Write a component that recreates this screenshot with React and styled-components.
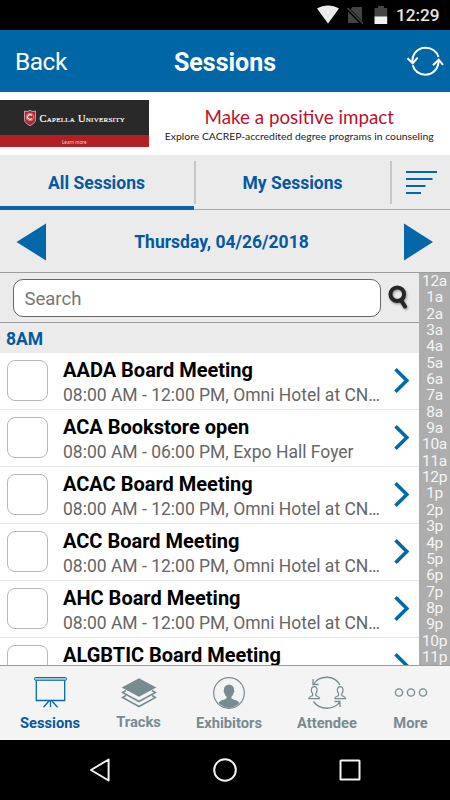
import React, { useState } from "react";
import styled, { createGlobalStyle } from "styled-components";

const sessions = [
    { title: "AADA Board Meeting", info: "08:00 AM - 12:00 PM, Omni Hotel at CN…" },
    { title: "ACA Bookstore open", info: "08:00 AM - 06:00 PM, Expo Hall Foyer" },
    { title: "ACAC Board Meeting", info: "08:00 AM - 12:00 PM, Omni Hotel at CN…" },
    { title: "ACC Board Meeting", info: "08:00 AM - 12:00 PM, Omni Hotel at CN…" },
    { title: "AHC Board Meeting", info: "08:00 AM - 12:00 PM, Omni Hotel at CN…" },
    { title: "ALGBTIC Board Meeting" },
];

const hours = ["a", "p"].flatMap((half) =>
    [12, 1, 2, 3, 4, 5, 6, 7, 8, 9, 10, 11].map((hour) => hour + half)
);

function StatusIcons() {
    return (
        <svg width="72" height="30" viewBox="0 0 72 30">
            <path d="M1 8.600C7.600 4.500 16.400 4.500 23 8.600L12 23.600Z" fill="#ececec" />
            <path d="M36.500 7H46v16H32V11.500Z" fill="#444" />
            <path d="M30.500 7.500l16 16.500" stroke="#000" strokeWidth="3.400" />
            <path d="M31.500 8l15.500 15.600" stroke="#505050" strokeWidth="1.300" />
            <path d="M62 6h6v2h3.200v9H58.500V8H62Z" fill="#444" />
            <path d="M58.500 16.500h12.700V24H58.500Z" fill="#f2f2f2" />
        </svg>
    );
}

function RefreshIcon() {
    return (
        <svg width="38" height="34" viewBox="0 0 38 34" fill="none" stroke="#fff" strokeWidth="2">
            <path d="M6.500 19C5.500 10.500 11.500 3.800 19.500 3.800c6.200 0 11.200 3.800 13 9.200" />
            <path d="M32.500 16C33 24.500 27 30.700 19.300 30.700c-6 0-11-3.800-12.600-9.500" />
            <path d="M1.500 14.300l5.200 4.900 5-5.500M27 21.200l5.700-5.400 4.300 5" />
        </svg>
    );
}

function SearchIcon() {
    return (
        <svg width="24" height="28" viewBox="0 0 24 28" fill="none">
            <defs>
                <filter id="sombra" x="-30%" y="-30%" width="160%" height="160%">
                    <feDropShadow dx="0.8" dy="1.2" stdDeviation="1.2" floodOpacity="0.4" />
                </filter>
            </defs>
            <g filter="url(#sombra)" stroke="#262626">
                <circle cx="11.300" cy="10.200" r="6.800" strokeWidth="4" />
                <path d="M15.200 16.500l3.800 6" strokeWidth="4.200" strokeLinecap="round" />
            </g>
        </svg>
    );
}

function CapellaShield() {
    return (
        <svg width="12" height="16" viewBox="0 0 12 16">
            <path d="M.5 1L3 1.600 6 .4l3 1.200 2.500-.6v8.500C11.500 12.500 9 14 6 15.700 3 14 .5 12.500.5 9.500Z" fill="#ad2430" stroke="#c8c0c0" strokeWidth=".8" />
            <circle cx="6" cy="7" r="3.800" fill="#c02834" stroke="#e5bcc0" strokeWidth=".6" />
            <path d="M7.700 5.500a2.300 2.300 0 1 0 0 3" fill="none" stroke="#fff" strokeWidth="1.200" />
        </svg>
    );
}

function SessionsIcon() {
    return (
        <svg width="34" height="34" viewBox="0 0 34 34" fill="none" stroke="#0769a8" strokeWidth="1.300">
            <path d="M3.300 4.500V24.500h28.400V4.500" />
            <rect x="1.500" y="1.500" width="32" height="2.800" rx="1" fill="#a9cae1" strokeWidth="1" />
            <path d="M17.500 25v6M16 25l-5.500 6.300M19 25l5.500 6.300" />
        </svg>
    );
}

function TracksIcon() {
    return (
        <svg width="36" height="34" viewBox="0 0 36 34" fill="none" stroke="#788b91">
            <path d="M5 19.500L1.500 21.500 18 30.500l16.500-9-3.500-2" fill="#f4f4f4" strokeWidth="1.600" />
            <path d="M5 14.500L1.500 16.500 18 25.500l16.500-9-3.500-2" fill="#f4f4f4" strokeWidth="1.600" />
            <path d="M18 2.200L35.300 11.500 18 20.800.7 11.500Z" fill="#788b91" stroke="none" />
        </svg>
    );
}

function ExhibitorsIcon() {
    return (
        <svg width="34" height="34" viewBox="0 0 34 34">
            <circle cx="17" cy="17" r="15.300" fill="none" stroke="#788b91" strokeWidth="1.200" />
            <path d="M17 8.800c3.300 0 5.200 2.200 5 5.500.8.800.3 2.300-.5 2.800-.4 1.700-1.100 2.800-2 3.500v2c3 1.600 6.600 1.800 7.900 4.500A14.800 14.800 0 0 1 17 32a14.800 14.800 0 0 1-10.400-4.900c1.300-2.700 4.900-2.900 7.900-4.500v-2c-.9-.7-1.600-1.800-2-3.500-.8-.5-1.300-2-.5-2.800-.2-3.300 1.700-5.500 5-5.500Z" fill="#788b91" />
        </svg>
    );
}

function AttendeeIcon() {
    const pessoa = "M-1.800 2.600v2c-1.200 1-4.200.9-4.200 3.300H6c0-2.400-3-2.300-4.200-3.300v-2C4.200-.2 3.500-4.700 0-4.700S-4.200-.2-1.800 2.600Z";
    return (
        <svg width="40" height="34" viewBox="0 0 40 34" fill="none" stroke="#788b91" strokeWidth="1.300">
            <path d="M33 9C27.500-1 13-1.300 6.500 8M6 3V8.500H11.500" />
            <path d="M6.500 25.500c6.500 9 20.500 9 26.700 0M27.500 25.500H33V31" />
            <path d={pessoa} transform="translate(7.200 15.200) scale(.9 .95)" />
            <path d={pessoa} transform="translate(33.200 15.200) scale(.9 .95)" />
        </svg>
    );
}

function MoreIcon() {
    return (
        <svg width="36" height="34" viewBox="0 0 36 34" fill="none" stroke="#788b91" strokeWidth="1.400">
            <circle cx="6" cy="16.500" r="3.600" />
            <circle cx="18" cy="16.500" r="3.600" />
            <circle cx="30" cy="16.500" r="3.600" />
        </svg>
    );
}

const menu = [
    { label: "Sessions", icon: <SessionsIcon />, width: 100 },
    { label: "Tracks", icon: <TracksIcon />, width: 77, lift: 1 },
    { label: "Exhibitors", icon: <ExhibitorsIcon />, width: 104 },
    { label: "Attendee", icon: <AttendeeIcon />, width: 92 },
    { label: "More", icon: <MoreIcon />, width: 75 },
];

function App() {
    const [tab, setTab] = useState("all");
    const [search, setSearch] = useState("");
    const [marked, setMarked] = useState([]);

    function toggle(title) {
        setMarked(
            marked.includes(title) ? marked.filter((item) => item !== title) : [...marked, title]
        );
    }

    return (
        <Screen>
            <GlobalStyle />
            <StatusBar>
                <StatusIcons />
                <Clock>12:29</Clock>
            </StatusBar>
            <Header>
                <Back>Back</Back>
                <Title>Sessions</Title>
                <Refresh><RefreshIcon /></Refresh>
            </Header>
            <Banner>
                <Sponsor>
                    <SponsorName>
                        <CapellaShield />
                        <span>Capella University</span>
                    </SponsorName>
                    <LearnMore>Learn more</LearnMore>
                </Sponsor>
                <Slogan>
                    <SloganTitle>Make a positive impact</SloganTitle>
                    <SloganText>Explore CACREP-accredited degree programs in counseling</SloganText>
                </Slogan>
            </Banner>
            <Tabs>
                <Tab $active={tab === "all"} onClick={() => setTab("all")}>All Sessions</Tab>
                <Divider />
                <Tab $active={tab === "my"} onClick={() => setTab("my")}>My Sessions</Tab>
                <Divider />
                <Filter>
                    <svg width="32" height="26" viewBox="0 0 32 26" stroke="#0367a8" strokeWidth="2">
                        <path d="M0 2h31M0 9h26.500M0 16h19.500M0 23h15" />
                    </svg>
                </Filter>
            </Tabs>
            <DateBar>
                <Arrow viewBox="0 0 30 38"><path d="M.5 19L30 .5v37Z" /></Arrow>
                <DateText>Thursday, 04/26/2018</DateText>
                <Arrow viewBox="0 0 30 38"><path d="M30 19L1 .5v37Z" /></Arrow>
            </DateBar>
            <Content>
                <List>
                    <SearchBar>
                        <SearchInput
                            placeholder="Search"
                            value={search}
                            onChange={(e) => setSearch(e.target.value)}
                        />
                        <SearchIcon />
                    </SearchBar>
                    <Hour>8AM</Hour>
                    {sessions.map(({ title, info }) => (
                        <Session key={title}>
                            <Checkbox $marked={marked.includes(title)} onClick={() => toggle(title)} />
                            <SessionData>
                                <SessionTitle>{title}</SessionTitle>
                                <SessionInfo>{info}</SessionInfo>
                            </SessionData>
                            <svg width="17" height="26" viewBox="0 0 17 26" fill="none" stroke="#0569a8" strokeWidth="3.600">
                                <path d="M1.500 1.300L12.800 12.500 1.500 23.700" />
                            </svg>
                        </Session>
                    ))}
                </List>
                <HourIndex>
                    {hours.map((hour) => <span key={hour}>{hour}</span>)}
                </HourIndex>
            </Content>
            <Menu>
                {menu.map(({ label, icon, width, lift }) => (
                    <MenuItem key={label} $width={width} $active={label === "Sessions"} $lift={lift}>
                        {icon}
                        <span>{label}</span>
                    </MenuItem>
                ))}
            </Menu>
            <AndroidBar>
                <svg width="24" height="26" viewBox="0 0 24 26"><path d="M3 13L20.600 2.500v21Z" /></svg>
                <svg width="26" height="26" viewBox="0 0 26 26"><circle cx="13" cy="13" r="10.800" /></svg>
                <svg width="24" height="26" viewBox="0 0 24 26"><rect x="2.500" y="3.500" width="19" height="19" rx=".5" /></svg>
            </AndroidBar>
        </Screen>
    );
}

const GlobalStyle = createGlobalStyle`
    * {
        box-sizing: border-box;
    }

    body {
        margin: 0;
        font-family: "Roboto", sans-serif;
    }

    button {
        border: 0;
        padding: 0;
        background: none;
        font-family: inherit;
    }

    svg {
        display: block;
        flex-shrink: 0;
    }
`;

const Screen = styled.div`
    width: 450px;
    height: 800px;
    display: flex;
    flex-direction: column;
    overflow: hidden;
    background-color: #ebebeb;
`;

const StatusBar = styled.div`
    height: 30px;
    flex-shrink: 0;
    display: flex;
    align-items: center;
    justify-content: flex-end;
    gap: 8px;
    padding-right: 10px;
    background-color: #000;
`;

const Clock = styled.span`
    width: 44px;
    font-size: 17.2px;
    font-weight: 500;
    line-height: 30px;
    color: #e6e6e6;
`;

const Header = styled.header`
    height: 62px;
    flex-shrink: 0;
    display: grid;
    grid-template-columns: 100px 1fr 100px;
    align-items: center;
    background-color: #0066a6;
    color: #fff;
`;

const Back = styled.button`
    padding: 2px 0 0 15px;
    text-align: left;
    font-size: 24.5px;
    letter-spacing: -0.5px;
    line-height: 30px;
    color: #fff;
`;

const Title = styled.h1`
    margin: 0;
    padding-top: 3px;
    text-align: center;
    font-size: 25px;
    font-weight: 700;
    line-height: 30px;
`;

const Refresh = styled.button`
    justify-self: end;
    padding-right: 6px;
`;

const Banner = styled.div`
    height: 63px;
    flex-shrink: 0;
    display: flex;
    padding-top: 8px;
    background-color: #fff;
`;

const Sponsor = styled.div`
    width: 148.5px;
    height: 47px;
    display: flex;
    flex-direction: column;
    background-color: #292929;
`;

const SponsorName = styled.div`
    flex: 1;
    display: flex;
    align-items: center;
    padding: 1px 0 0 24px;
    gap: 3.5px;

    > span {
        padding-top: 1px;
        font-family: "Liberation Serif", serif;
        font-size: 10.5px;
        font-variant: small-caps;
        letter-spacing: 0.25px;
        white-space: nowrap;
        color: #fff;
        -webkit-text-stroke: 0.2px #fff;
    }
`;

const LearnMore = styled.div`
    height: 12px;
    text-align: center;
    font-family: "Lato", sans-serif;
    font-size: 5px;
    line-height: 14px;
    background-color: #b41f26;
    color: #f0c8c8;
`;

const Slogan = styled.div`
    flex: 1;
    display: flex;
    flex-direction: column;
    align-items: center;
    padding-top: 5px;
    font-family: "Lato", sans-serif;
    white-space: nowrap;
`;

const SloganTitle = styled.p`
    margin: 0;
    font-size: 18.8px;
    line-height: 24px;
    color: #be1028;
`;

const SloganText = styled.p`
    margin: 0;
    font-size: 10.4px;
    line-height: 14px;
    color: #222;
`;

const Tabs = styled.nav`
    height: 55px;
    flex-shrink: 0;
    display: flex;
    border-bottom: 1px solid #a8a8a8;
`;

const Tab = styled.button`
    width: 194px;
    height: 55px;
    padding: 5px 1px 0 0;
    border-bottom: 4px solid ${(props) => (props.$active ? "#0864a8" : "transparent")};
    font-size: 17.5px;
    font-weight: 700;
    color: #0459a3;
`;

const Divider = styled.div`
    width: 2px;
    height: 43px;
    margin-top: 6px;
    background-color: #c7c7c7;
`;

const Filter = styled.button`
    padding: 1px 0 0 14px;
    display: flex;
    align-items: center;
`;

const DateBar = styled.div`
    height: 63px;
    flex-shrink: 0;
    display: flex;
    align-items: center;
    justify-content: space-between;
    padding: 1px 17px 0 16px;
    border-bottom: 1px solid #9c9c9c;
`;

const DateText = styled.span`
    padding-right: 6px;
    font-size: 17.5px;
    font-weight: 700;
    color: #0459a3;
`;

const Arrow = styled.svg`
    width: 30px;
    height: 38px;
    fill: #0367a8;
`;

const Content = styled.main`
    height: 392px;
    flex-shrink: 0;
    display: flex;
`;

const List = styled.div`
    width: 419px;
    overflow: hidden;
    background-color: #fff;
`;

const SearchBar = styled.div`
    height: 50px;
    display: flex;
    align-items: center;
    gap: 5px;
    padding-left: 12.5px;
    border-bottom: 1px solid #999;
    background-color: #ebebeb;
`;

const SearchInput = styled.input`
    width: 368px;
    height: 38px;
    padding: 2px 11px 0;
    border: 1px solid #666;
    border-radius: 10px;
    outline: 0;
    font-family: inherit;
    font-size: 18.5px;
    color: #333;

    &::placeholder {
        color: #777;
    }
`;

const Hour = styled.div`
    height: 30px;
    padding-left: 6px;
    font-size: 17.5px;
    font-weight: 700;
    line-height: 33px;
    background-color: #ebebeb;
    color: #0459a3;
`;

const Session = styled.div`
    height: 57px;
    display: flex;
    align-items: center;
    padding: 0 8px 0 7px;
    border-bottom: 1px solid #e6e6e6;
`;

const Checkbox = styled.button`
    width: 41px;
    height: 41px;
    flex-shrink: 0;
    margin-bottom: 2px;
    border: 1.5px solid #b8b8b8;
    border-radius: 8px;
    background-color: ${(props) => (props.$marked ? "#0367a8" : "#fff")};
`;

const SessionData = styled.div`
    width: 318px;
    margin: 0 13px 0 15px;
`;

const SessionTitle = styled.h2`
    margin: 0;
    padding-top: 1px;
    font-size: 20px;
    font-weight: 700;
    line-height: 26px;
    color: #000;
`;

const SessionInfo = styled.p`
    height: 24px;
    margin: 0;
    white-space: nowrap;
    font-size: 17.5px;
    line-height: 24px;
    color: #666;
`;

const HourIndex = styled.div`
    width: 31px;
    display: flex;
    flex-direction: column;
    align-items: center;
    background-color: #adadad;

    > span {
        height: 16.35px;
        font-size: 15.5px;
        letter-spacing: -0.35px;
        line-height: 17px;
        color: #f4f4f4;
    }
`;

const Menu = styled.nav`
    height: 75px;
    flex-shrink: 0;
    display: flex;
    border-top: 1px solid #9c9c9c;
    background-color: #f4f4f4;
`;

const MenuItem = styled.button`
    width: ${(props) => props.$width}px;
    display: flex;
    flex-direction: column;
    align-items: center;
    padding-top: 10px;
    font-size: 14.7px;
    font-weight: 700;
    color: ${(props) => (props.$active ? "#0459a3" : "#788b91")};

    > span {
        margin-top: ${(props) => (props.$lift ? 3 : 4)}px;
        line-height: 18px;
    }
`;

const AndroidBar = styled.div`
    height: 60px;
    flex-shrink: 0;
    display: flex;
    align-items: center;
    justify-content: center;
    gap: 100px;
    background-color: #000;

    svg {
        fill: none;
        stroke: #f2f2f2;
        stroke-width: 2;
        stroke-linejoin: round;
    }
`;

export default App;
